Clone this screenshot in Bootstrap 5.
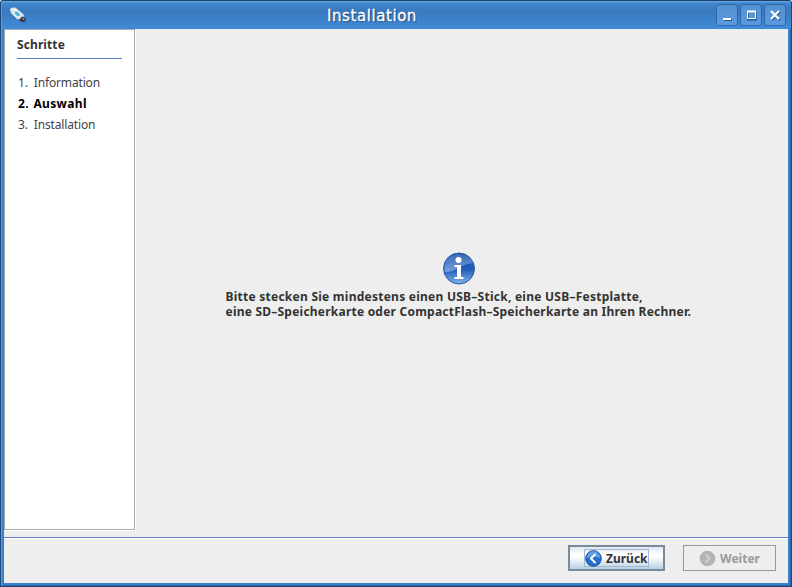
<!DOCTYPE html>
<html lang="de">
<head>
<meta charset="utf-8">
<meta name="viewport" content="width=device-width, initial-scale=1">
<title>Installation</title>
<link href="https://cdn.jsdelivr.net/npm/bootstrap@5.3.0/dist/css/bootstrap.min.css" rel="stylesheet">
<style>
body{font-family:"Noto Sans","Open Sans",sans-serif;font-size:12px;line-height:15px;color:#333;background:#fff}
.window{height:587px;width:792px;background:#3a80cd;border:1px solid #1c487b;border-top-color:#204065;border-radius:3px 3px 0 0;padding:0 3px 3px;box-shadow:inset 1px 1px #5fa0e4,inset -1px -1px #2865a8;overflow:hidden}
.titlebar{height:28px;margin:0 -3px;padding:1px 4px 0 6px;background:linear-gradient(#5b9fe2 0,#5b9fe2 1px,#4186ce 2px,#3978bd 10px,#3f8ad8 27px);border-left:1px solid #5698df}
.title{font-family:"DejaVu Sans",sans-serif;font-size:15px;color:#fff;text-shadow:1px 1px 1px #183b65;line-height:28px;letter-spacing:.57px;-webkit-text-stroke:.3px #fff}
.controls{gap:2px;padding:2px 1px 0 0}
.winbtn{width:22px;height:22px;background:linear-gradient(#5491d0,#5b9bdd);border:1px solid #2e68a8;border-radius:3px;padding:0}
.winbtn svg{display:block}
.pane{background:#eee;height:508px}
.steps{width:131px;height:501px;background:#fff;border:1px solid #a9a9a9;box-shadow:1px 1px #fff;padding:7px 12px 0}
.steps h1{font-size:12px;line-height:15px;letter-spacing:.1px;margin-bottom:13px;border-bottom:1px solid #5b80c5;height:22px}
.steps li{height:21px;line-height:21px;padding-left:1px;letter-spacing:-.15px;word-spacing:3px;color:#444;white-space:pre}
.steps li.current{color:#000;font-weight:700;letter-spacing:.35px;word-spacing:1px}
.message{padding-top:223px;padding-right:6px}
.message p{width:466px;margin:3px auto 0;font-weight:700;white-space:nowrap}
.line-one{letter-spacing:.25px}
.line-two{letter-spacing:.225px}
.footer-bar{background:#eee;height:46px;border-top:1px solid #5b80c5;box-shadow:inset 0 1px #fff;padding:7px 12px 0;gap:18px}
.wizbtn{border-radius:0;font-size:12px;line-height:15px;font-weight:700;padding:0;color:#333;height:26px}
.back{width:97px;border:2px solid #7a8a99;background:linear-gradient(#dde8f3 0,#fff 35%,#fff 45%,#b8cfe5 100%)}
.back:hover{color:#333}
.focusbox{border:1px solid #a3b8cc;height:18px;width:65px}
.next,.next:disabled{width:93px;border:1px solid #999;color:#999;opacity:1;background:#eee}
</style>
<script src="https://cdn.jsdelivr.net/npm/bootstrap@5.3.0/dist/js/bootstrap.bundle.min.js"></script>
</head>
<body class="overflow-hidden">
<main class="window">
<header class="titlebar d-flex align-items-start">
 <svg class="mt-1" width="20" height="20" viewBox="0 0 20 20"><path d="M5 11l10 6 4-2-7-7z" fill="#184775" opacity=".45"/><path d="M2 3q2-2 6-1l8 7-2 5-5-1-6-6z" fill="#d5e6ef" stroke="#a8c4d5" stroke-width=".7"/><path d="M3 4l4-1 6 5" fill="none" stroke="#fff"/><ellipse cx="9.300" cy="7.800" rx="3.500" ry="2.200" transform="rotate(38 9.300 7.800)" fill="#4eb3d8" stroke="#eee"/><path d="M14 10.500l4 2.500-3 3-4-2z" fill="#333"/><path d="M14 12.500l2 1" stroke="#aaa"/></svg>
 <div class="title flex-grow-1 text-center"><span>Installation</span></div>
 <div class="controls d-flex">
 <button class="winbtn" aria-label="Minimieren"><svg width="20" height="20"><path d="M7 15h8" stroke="#24548c" stroke-width="2"/><path d="M6 14h8" stroke="#fff" stroke-width="2"/></svg></button>
 <button class="winbtn" aria-label="Maximieren"><svg width="20" height="20"><path d="M7 7h8v8H7z" fill="none" stroke="#24548c" stroke-width="1.5"/><path d="M6.500 6.500h8v7h-8z" fill="none" stroke="#fff"/><path d="M6 6.500h9" stroke="#fff" stroke-width="2"/></svg></button>
 <button class="winbtn" aria-label="Schließen"><svg width="20" height="20"><path d="M7 7l8 8m0-8l-8 8" stroke="#24548c" stroke-width="2"/><path d="M6 6l8 8m0-8l-8 8" stroke="#fff" stroke-width="2.200"/></svg></button>
 </div>
</header>
<section class="pane d-flex">
 <aside class="steps flex-shrink-0"><h1 class="fw-bold">Schritte</h1>
 <ol class="list-unstyled m-0"><li>1. Information</li><li class="current">2. Auswahl</li><li>3. Installation</li></ol></aside>
 <div class="message flex-grow-1 text-center">
 <svg class="d-block mx-auto" width="34" height="34" viewBox="0 0 34 34"><defs><linearGradient id="info" x2="0" y2="1"><stop stop-color="#1646a0"/><stop offset=".55" stop-color="#2460bd"/><stop offset="1" stop-color="#84b4e8"/></linearGradient><linearGradient id="shine" x2="0" y2="1"><stop stop-color="#8eb3e0" stop-opacity=".3"/><stop offset="1" stop-color="#a8c8ed" stop-opacity=".6"/></linearGradient></defs><circle cx="17" cy="16.500" r="15.500" fill="url(#info)" stroke="#2857a5"/><path d="M2.500 17C2 7 9 2 17 2s14 5 14.500 9Q22 12 16 16T2.500 20z" fill="url(#shine)"/><circle cx="16.500" cy="8" r="3" fill="#fff"/><path d="M12.500 13h6.500v12h2.500v2h-9v-2h2.500v-10h-2.500z" fill="#fff"/></svg>
 <p class="text-start"><span class="line-one d-block">Bitte stecken Sie mindestens einen USB–Stick, eine USB–Festplatte,</span><span class="line-two d-block">eine SD–Speicherkarte oder CompactFlash–Speicherkarte an Ihren Rechner.</span></p>
 </div>
</section>
<footer class="footer-bar d-flex justify-content-end align-items-start">
 <button class="btn wizbtn back d-flex align-items-center justify-content-center"><span class="focusbox d-flex align-items-center"><svg class="flex-shrink-0 me-1" width="17" height="17" viewBox="0 0 17 17"><circle cx="8.500" cy="8.500" r="7.800" fill="#246fcb" stroke="#164c9b"/><path d="M1.500 8a7 7 0 0 1 14 0Q10 6 1.500 8z" fill="#80b5ec" opacity=".65"/><path d="M10.500 4l-4.500 4.500 4.500 4.500" fill="none" stroke="#fff" stroke-width="2"/></svg><span>Zurück</span></span></button>
 <button class="btn wizbtn next d-flex align-items-center justify-content-center" disabled><svg class="flex-shrink-0 me-1" width="17" height="17" viewBox="0 0 17 17"><circle cx="8.500" cy="8.500" r="7.800" fill="#b4b4b4"/><path d="M6.500 4.500l4 4-4 4" fill="none" stroke="#d0d0d0" stroke-width="2"/></svg><span>Weiter</span></button>
</footer>
</main>
</body>
</html>
